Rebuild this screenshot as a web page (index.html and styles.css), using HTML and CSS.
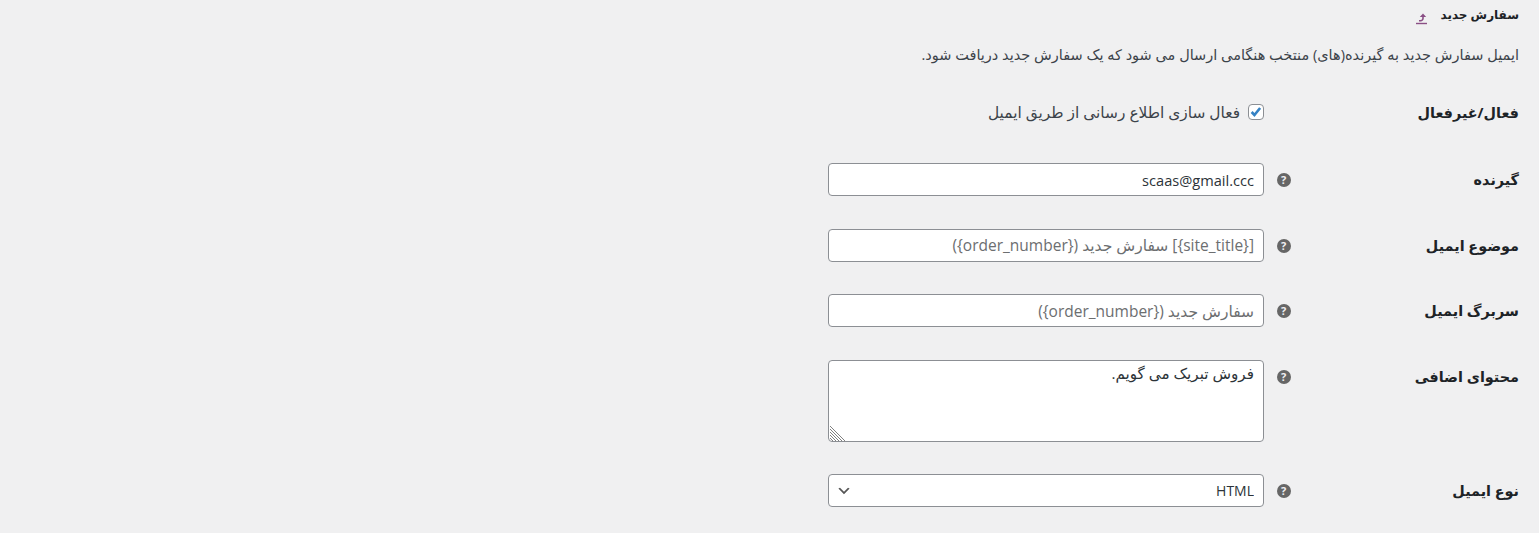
FILE: index.html
```html
<!DOCTYPE html>
<html lang="fa" dir="rtl">
<head>
  <meta charset="utf-8">
  <title>سفارش جدید</title>
  <link rel="stylesheet" href="styles.css">
</head>
<body>
  <h2 class="title">
    سفارش جدید
    <a class="up-link" href="#">
      <svg width="11" height="13" viewBox="0 0 11 13"><path d="M7 1.500 10.200 5H3.800z" fill="#8a4f85"/><path d="M7 4.500V6.500C7 8 5.500 8.800 3 8.800" fill="none" stroke="#8a4f85" stroke-width="1.600"/><path d="M0 11.500h11" fill="none" stroke="#8a4f85" stroke-width="1.400"/></svg>
    </a>
  </h2>
  <p class="intro">ایمیل سفارش جدید به گیرنده(های) منتخب هنگامی ارسال می شود که یک سفارش جدید دریافت شود.</p>

  <div class="settings">
    <div class="row row-check">
      <div class="label">فعال/غیرفعال</div>
      <div class="field">
        <label class="check-label">
          <input type="checkbox" class="check" checked>
          فعال سازی اطلاع رسانی از طریق ایمیل
        </label>
      </div>
    </div>
    <div class="row">
      <div class="label">گیرنده</div>
      <span class="help">?</span>
      <div class="field"><input type="text" class="input" dir="ltr" value="scaas@gmail.ccc"></div>
    </div>
    <div class="row">
      <div class="label">موضوع ایمیل</div>
      <span class="help">?</span>
      <div class="field"><input type="text" class="input" placeholder="[{site_title}] سفارش جدید ({order_number})"></div>
    </div>
    <div class="row">
      <div class="label">سربرگ ایمیل</div>
      <span class="help">?</span>
      <div class="field"><input type="text" class="input" placeholder="سفارش جدید ({order_number})"></div>
    </div>
    <div class="row">
      <div class="label">محتوای اضافی</div>
      <span class="help">?</span>
      <div class="field area-wrap">
        <textarea class="input area">فروش تبریک می گویم.</textarea>
        <svg class="grip" width="16" height="16" viewBox="0 0 16 16">
          <path d="M1 1 16 16M1 4 13 16M1 7 10 16M1 10 7 16M1 13 4 16" fill="none" stroke="#808080" stroke-width="1"/>
        </svg>
      </div>
    </div>
    <div class="row">
      <div class="label">نوع ایمیل</div>
      <span class="help">?</span>
      <div class="field">
        <select class="input select">
          <option>HTML</option>
        </select>
      </div>
    </div>
  </div>
</body>
</html>
```

FILE: styles.css
```css
body {
  margin: 0;
  padding: 0 20px 0 0;
  background-color: #f0f0f1;
  color: #3c434a;
  font-family: "Open Sans", "DejaVu Sans", sans-serif;
  font-size: 14.5px;
  line-height: 1.4;
}

.title {
  display: flex;
  align-items: center;
  gap: 13px;
  height: 22px;
  margin: 0;
  padding-top: 4px;
  font-size: 12px;
  line-height: 22px;
  font-weight: 700;
  color: #1d2327;
}

.up-link {
  display: flex;
  margin-top: 7px;
}

.intro {
  margin: 0;
  padding-top: 18px;
  line-height: 22px;
}

.settings {
  padding-top: 35.5px;
}

.row {
  display: flex;
  align-items: flex-start;
  padding-bottom: 32.5px;
}

.row-check {
  padding-bottom: 40.5px;
}

.label {
  width: 230px;
  line-height: 33px;
  font-size: 14.4px;
  font-weight: 700;
  color: #1d2327;
}

.help {
  flex: none;
  width: 14px;
  height: 14px;
  margin: 10px -1.5px 0 12.5px;
  border-radius: 50%;
  background-color: #666;
  color: #f0f0f1;
  font-size: 11px;
  font-weight: 700;
  line-height: 14px;
  text-align: center;
}

.field {
  width: 436px;
}

.row-check .field {
  margin-right: 10px;
}

.row-check .label {
  line-height: 21px;
  width: 245px;
}

.check-label {
  display: flex;
  align-items: center;
  width: 500px;
  font-size: 15.4px;
  line-height: 21px;
}

.check {
  appearance: none;
  width: 16px;
  height: 16px;
  margin: 0 0 0 8px;
  border: 1px solid #8c8f94;
  border-radius: 4px;
  background: #fff url("data:image/svg+xml;utf8,<svg xmlns='http://www.w3.org/2000/svg' viewBox='0 0 16 16'><path d='M3 8l3.200 3.400 6.500-8' fill='none' stroke='%233582c4' stroke-width='3'/></svg>") center no-repeat;
}

.input {
  display: block;
  box-sizing: border-box;
  width: 436px;
  height: 33px;
  margin: 0;
  padding: 0 9px;
  border: 1px solid #8c8f94;
  border-radius: 4px;
  background-color: #fff;
  color: #2c3338;
  font-family: "Open Sans", "DejaVu Sans", sans-serif;
  font-size: 14.6px;
  text-align: right;
}

.input::placeholder {
  color: #6c6e70;
  opacity: 1;
  font-size: 15.5px;
}

.area-wrap {
  position: relative;
}

.area {
  height: 82px;
  padding: 2px 9px;
  font-size: 15.2px;
  line-height: 1.4;
  resize: none;
}

.grip {
  position: absolute;
  left: 1px;
  bottom: 1px;
}

.select {
  appearance: none;
  font-size: 14px;
  background: #fff url("data:image/svg+xml;utf8,<svg xmlns='http://www.w3.org/2000/svg' viewBox='0 0 20 20'><path d='M5 6l5 5 5-5 2 1-7 7-7-7z' fill='%23555'/></svg>") left 7px top 8px / 16px 16px no-repeat;
}
```
